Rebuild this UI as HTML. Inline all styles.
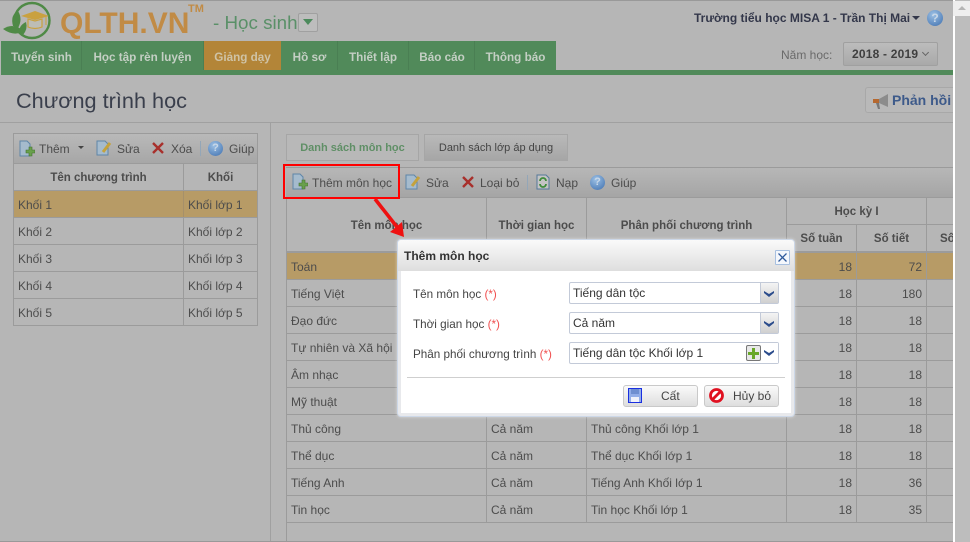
<!DOCTYPE html>
<html><head><meta charset="utf-8">
<style>
html,body{margin:0;padding:0;}
body{width:970px;height:542px;overflow:hidden;position:relative;background:#b6b6b6;font:12px "Liberation Sans",sans-serif;color:#4c4c4c;}
.a,.t,.l,.c,.r{position:absolute;}
.t{white-space:nowrap;line-height:16px;}
.b{font-weight:bold;font-size:11.5px;text-align:center;}
.tab{position:absolute;top:41px;height:29px;line-height:34px;text-align:center;font-weight:bold;color:#c4cfc4;background:#518a5a;font-size:11.7px;border-right:1px solid #4a7f53;}
.l{background:#9b9b9b;}
.sel{position:absolute;left:569px;width:208px;height:20px;background:#fff;border:1px solid #c3cad8;border-radius:2px;line-height:20px;color:#333;text-indent:3px;}
.dd{position:absolute;right:0;top:0;width:17px;height:20px;background:linear-gradient(#f4f4f4,#cfcfcf);border-left:1px solid #c3cad8;}
.ar{position:absolute;left:764px;}
.btn{position:absolute;top:385px;height:20px;background:linear-gradient(#fafafa,#dedede);border:1px solid #c9c9c9;border-radius:3px;line-height:20px;color:#444;}
.lb{position:absolute;color:#444;white-space:nowrap;line-height:16px;left:413px;font-size:11.7px;}
.lb i{font-style:normal;color:#f05050;}
</style></head><body>

<!-- top line -->
<div class="a" style="left:0;top:0;width:970px;height:1px;background:#999"></div>

<!-- logo -->
<svg class="a" style="left:0;top:0" width="60" height="42" viewBox="0 0 60 42">
<circle cx="32" cy="20.5" r="17.5" fill="none" stroke="#4f8a46" stroke-width="2.4"/>
<path d="M21 16 L35 11 L49 16 L35 20Z" fill="#c9a13f"/>
<path d="M28 19 V27 Q35 30 42 27 V19 L35 21Z" fill="#bdbdb5" stroke="#c9a13f" stroke-width="1.2"/>
<path d="M46 16 V25" stroke="#c9a13f" stroke-width="1"/>
<path d="M3 29 Q13 22 24 31 Q14 37 3 29Z" fill="#4f8a46"/>
<path d="M13 26 Q10 15 18 11 Q23 19 18 28Z" fill="#4f8a46"/>
<path d="M19 33 Q19 25 26 22 Q28 29 23 35Z" fill="#4f8a46"/>
</svg>
<div class="t" style="left:60px;top:5px;font:bold 30px/38px 'Liberation Sans',sans-serif;color:#c18b45;">QLTH.VN</div>
<div class="t" style="left:188px;top:3px;font:bold 11px/12px 'Liberation Sans',sans-serif;color:#c18b45;">TM</div>
<div class="t" style="left:213px;top:12px;font:18.8px/22px 'Liberation Sans',sans-serif;color:#5a9068;">- Học sinh</div>
<div class="a" style="left:298px;top:13px;width:18px;height:17px;border:1px solid #a0a0a0;border-radius:2px;background:#bdbdbd"></div>
<div class="a" style="left:303px;top:19px;width:0;height:0;border-left:5px solid transparent;border-right:5px solid transparent;border-top:6px solid #4c8a5c"></div>

<!-- user -->
<div class="t" style="left:694px;top:10px;color:#33374a;font-weight:bold;font-size:12px;">Trường tiểu học MISA 1 - Trần Thị Mai</div>
<div class="a" style="left:912px;top:16px;width:0;height:0;border-left:4px solid transparent;border-right:4px solid transparent;border-top:4px solid #33374a"></div>
<div class="a" style="left:927px;top:10px;width:16px;height:16px;border-radius:50%;background:radial-gradient(circle at 40% 30%,#9cc0e4,#3e6fae);color:#c9d8e8;font:bold 12px/16px 'Liberation Sans';text-align:center">?</div>

<!-- nav -->
<div class="a" style="left:1px;top:70px;width:952px;height:5px;background:#518a5a"></div>
<div class="tab" style="left:1px;width:80px;text-indent:1px">Tuyển sinh</div>
<div class="tab" style="left:82px;width:121px">Học tập rèn luyện</div>
<div class="tab" style="left:204px;width:77px;background:#b38538;color:#cfc3a6;border-right:1px solid #518a5a">Giảng dạy</div>
<div class="tab" style="left:282px;width:55px">Hồ sơ</div>
<div class="tab" style="left:338px;width:70px">Thiết lập</div>
<div class="tab" style="left:409px;width:65px;text-indent:1px">Báo cáo</div>
<div class="tab" style="left:475px;width:81px;border-right:0">Thông báo</div>

<!-- year -->
<div class="t" style="left:781px;top:47px;color:#6a6a6a">Năm học:</div>
<div class="a" style="left:843px;top:42px;width:93px;height:22px;border:1px solid #a0a0a0;background:linear-gradient(#bcbcbc,#a9a9a9);border-radius:2px"></div>
<div class="t" style="left:852px;top:46px;color:#3f3f3f;font-weight:bold;letter-spacing:.2px">2018 - 2019</div>
<div class="a" style="left:923px;top:50px;width:4px;height:4px;border-right:1px solid #666;border-bottom:1px solid #666;transform:rotate(45deg)"></div>

<!-- title -->
<div class="t" style="left:16px;top:88px;font:21.7px/26px 'Liberation Sans',sans-serif;color:#3a3f4c;">Chương trình học</div>
<div class="a" style="left:865px;top:87px;width:88px;height:26px;border:1px solid #a8a8a8;border-right:0;border-radius:3px 0 0 3px;box-sizing:border-box;background:#b9b9b9"></div>
<svg class="a" style="left:872px;top:93px" width="18" height="18"><path d="M2 6h5l9-5v13l-9-4H2z" fill="#8c8c8c"/><rect x="1" y="6" width="6" height="4" fill="#b5682f"/><path d="M4 10l2 6h2l-1-6z" fill="#777"/></svg>
<div class="t" style="left:892px;top:92px;font-weight:bold;font-size:14px;color:#3d5a8a">Phản hồi</div>
<div class="a" style="left:0;top:122px;width:953px;height:1px;background:#a0a0a0"></div>
<div class="a" style="left:270px;top:123px;width:1px;height:419px;background:#a0a0a0"></div>

<!-- left panel -->
<div class="a" style="left:13px;top:133px;width:245px;height:193px;border:1px solid #9b9b9b;box-sizing:border-box"></div>
<div class="a" style="left:14px;top:134px;width:243px;height:30px;background:linear-gradient(#b9b9b9,#a6a6a6)"></div>
<svg class="a" style="left:19px;top:140px" width="16" height="17"><path d="M1 1h7l3 3v12H1z" fill="#a5bbcd" stroke="#5f86a8"/><path d="M10 7h3v3h3v3h-3v3h-3v-3H7v-3h3z" fill="#69a04c" stroke="#43702f" stroke-width=".6"/></svg>
<div class="t" style="left:39px;top:141px">Thêm</div>
<div class="a" style="left:78px;top:146px;border-left:3px solid transparent;border-right:3px solid transparent;border-top:3px solid #444"></div>
<svg class="a" style="left:96px;top:140px" width="16" height="16"><path d="M1 1h8l3 3v11H1z" fill="#a5bbcd" stroke="#5f86a8"/><path d="M14 3L7 12" stroke="#c4a23c" stroke-width="3"/></svg>
<div class="t" style="left:117px;top:141px">Sửa</div>
<svg class="a" style="left:152px;top:142px" width="12" height="12"><path d="M1 1L11 11M11 1L1 11" stroke="#a8302c" stroke-width="2.4"/></svg>
<div class="t" style="left:171px;top:141px">Xóa</div>
<div class="a" style="left:200px;top:141px;width:1px;height:15px;background:#93a6b8"></div>
<div class="a" style="left:208px;top:141px;width:15px;height:15px;border-radius:50%;background:radial-gradient(circle at 40% 30%,#9cc0e4,#3e6fae);color:#c9d8e8;font:bold 11px/15px 'Liberation Sans';text-align:center">?</div>
<div class="t" style="left:229px;top:141px">Giúp</div>
<div class="l" style="left:14px;top:163px;width:243px;height:1px"></div>
<div class="l" style="left:14px;top:190px;width:243px;height:1px"></div>
<div class="l" style="left:14px;top:244px;width:243px;height:1px"></div>
<div class="l" style="left:14px;top:271px;width:243px;height:1px"></div>
<div class="l" style="left:14px;top:298px;width:243px;height:1px"></div>
<div class="l" style="left:183px;top:164px;width:1px;height:161px"></div>
<div class="a" style="left:14px;top:191px;width:243px;height:27px;background:#b79b66"></div>
<div class="l" style="left:183px;top:191px;width:1px;height:27px;background:#a6906a"></div>
<div class="t b" style="left:14px;width:169px;top:170px;">Tên chương trình</div>
<div class="t b" style="left:184px;width:73px;top:170px;">Khối</div>
<div class="t" style="left:18px;top:197px">Khối 1</div><div class="t" style="left:188px;top:197px">Khối lớp 1</div>
<div class="t" style="left:18px;top:224px">Khối 2</div><div class="t" style="left:188px;top:224px">Khối lớp 2</div>
<div class="t" style="left:18px;top:251px">Khối 3</div><div class="t" style="left:188px;top:251px">Khối lớp 3</div>
<div class="t" style="left:18px;top:278px">Khối 4</div><div class="t" style="left:188px;top:278px">Khối lớp 4</div>
<div class="t" style="left:18px;top:305px">Khối 5</div><div class="t" style="left:188px;top:305px">Khối lớp 5</div>
<div class="l" style="left:14px;top:217px;width:243px;height:1px"></div>

<!-- right tabs -->
<div class="a" style="left:286px;top:134px;width:133px;height:27px;border:1px solid #a6a6a6;box-sizing:border-box;background:#b8b8b8;text-align:center;line-height:26px;font-weight:bold;color:#5f8f66;font-size:11px">Danh sách môn học</div>
<div class="a" style="left:424px;top:134px;width:144px;height:27px;border:1px solid #a6a6a6;box-sizing:border-box;background:linear-gradient(#b9b9b9,#a6a6a6);text-align:center;line-height:26px;font-size:11px;color:#444">Danh sách lớp áp dụng</div>

<!-- toolbar -->
<div class="a" style="left:286px;top:167px;width:667px;height:30px;background:linear-gradient(#b7b7b7,#a5a5a5);border-top:1px solid #9b9b9b;box-sizing:border-box"></div>
<svg class="a" style="left:292px;top:173px" width="16" height="17"><path d="M1 1h7l3 3v12H1z" fill="#a5bbcd" stroke="#5f86a8"/><path d="M10 7h3v3h3v3h-3v3h-3v-3H7v-3h3z" fill="#69a04c" stroke="#43702f" stroke-width=".6"/></svg>
<div class="t" style="left:312px;top:175px">Thêm môn học</div>
<svg class="a" style="left:405px;top:174px" width="16" height="16"><path d="M1 1h8l3 3v11H1z" fill="#a5bbcd" stroke="#5f86a8"/><path d="M14 3L7 12" stroke="#c4a23c" stroke-width="3"/></svg>
<div class="t" style="left:426px;top:175px">Sửa</div>
<svg class="a" style="left:462px;top:176px" width="12" height="12"><path d="M1 1L11 11M11 1L1 11" stroke="#a8302c" stroke-width="2.4"/></svg>
<div class="t" style="left:480px;top:175px">Loại bỏ</div>
<div class="a" style="left:527px;top:175px;width:1px;height:15px;background:#93a6b8"></div>
<svg class="a" style="left:536px;top:174px" width="15" height="16"><path d="M1 1h9l3 3v11H1z" fill="#c4c4c4" stroke="#55789a"/><path d="M4 7a3 3 0 0 1 6 0M10 10a3 3 0 0 1-6 0" fill="none" stroke="#3f8c3c" stroke-width="1.8"/></svg>
<div class="t" style="left:556px;top:175px">Nạp</div>
<div class="a" style="left:590px;top:175px;width:15px;height:15px;border-radius:50%;background:radial-gradient(circle at 40% 30%,#9cc0e4,#3e6fae);color:#c9d8e8;font:bold 11px/15px 'Liberation Sans';text-align:center">?</div>
<div class="t" style="left:611px;top:175px">Giúp</div>

<!-- main table grid -->
<div class="l" style="left:286px;top:197px;width:667px;height:1px"></div>
<div class="l" style="left:786px;top:224px;width:167px;height:1px"></div>
<div class="l" style="left:286px;top:251px;width:667px;height:2px"></div>
<div class="a" style="left:287px;top:253px;width:666px;height:26px;background:#b79b66"></div>
<div class="l" style="left:286px;top:279px;width:667px;height:1px"></div>
<div class="l" style="left:286px;top:306px;width:667px;height:1px"></div>
<div class="l" style="left:286px;top:333px;width:667px;height:1px"></div>
<div class="l" style="left:286px;top:360px;width:667px;height:1px"></div>
<div class="l" style="left:286px;top:387px;width:667px;height:1px"></div>
<div class="l" style="left:286px;top:414px;width:667px;height:1px"></div>
<div class="l" style="left:286px;top:441px;width:667px;height:1px"></div>
<div class="l" style="left:286px;top:468px;width:667px;height:1px"></div>
<div class="l" style="left:286px;top:495px;width:667px;height:1px"></div>
<div class="l" style="left:286px;top:522px;width:667px;height:1px"></div>
<div class="l" style="left:286px;top:197px;width:1px;height:345px"></div>
<div class="l" style="left:486px;top:197px;width:1px;height:326px"></div>
<div class="l" style="left:586px;top:197px;width:1px;height:326px"></div>
<div class="l" style="left:786px;top:197px;width:1px;height:326px"></div>
<div class="l" style="left:856px;top:225px;width:1px;height:298px"></div>
<div class="l" style="left:926px;top:197px;width:1px;height:326px"></div>

<div class="t b" style="left:287px;width:199px;top:218px;">Tên môn học</div>
<div class="t b" style="left:487px;width:99px;top:218px;">Thời gian học</div>
<div class="t b" style="left:587px;width:199px;top:218px;">Phân phối chương trình</div>
<div class="t b" style="left:787px;width:139px;top:204px;">Học kỳ I</div>
<div class="t b" style="left:787px;width:69px;top:231px;">Số tuần</div>
<div class="t b" style="left:857px;width:69px;top:231px;">Số tiết</div>
<div class="t b" style="left:940px;top:231px;">Số</div>

<div class="t" style="left:291px;top:259px">Toán</div>
<div class="t" style="left:291px;top:286px">Tiếng Việt</div>
<div class="t" style="left:291px;top:313px">Đạo đức</div>
<div class="t" style="left:291px;top:340px">Tự nhiên và Xã hội</div>
<div class="t" style="left:291px;top:367px">Âm nhạc</div>
<div class="t" style="left:291px;top:394px">Mỹ thuật</div>
<div class="t" style="left:291px;top:421px">Thủ công</div>
<div class="t" style="left:291px;top:448px">Thể dục</div>
<div class="t" style="left:291px;top:475px">Tiếng Anh</div>
<div class="t" style="left:291px;top:502px">Tin học</div>
<div class="t" style="left:491px;top:421px">Cả năm</div>
<div class="t" style="left:491px;top:448px">Cả năm</div>
<div class="t" style="left:491px;top:475px">Cả năm</div>
<div class="t" style="left:491px;top:502px">Cả năm</div>
<div class="t" style="left:591px;top:421px">Thủ công Khối lớp 1</div>
<div class="t" style="left:591px;top:448px">Thể dục Khối lớp 1</div>
<div class="t" style="left:591px;top:475px">Tiếng Anh Khối lớp 1</div>
<div class="t" style="left:591px;top:502px">Tin học Khối lớp 1</div>

<div class="t" style="left:787px;width:65px;text-align:right;top:259px">18</div><div class="t" style="left:857px;width:65px;text-align:right;top:259px">72</div>
<div class="t" style="left:787px;width:65px;text-align:right;top:286px">18</div><div class="t" style="left:857px;width:65px;text-align:right;top:286px">180</div>
<div class="t" style="left:787px;width:65px;text-align:right;top:313px">18</div><div class="t" style="left:857px;width:65px;text-align:right;top:313px">18</div>
<div class="t" style="left:787px;width:65px;text-align:right;top:340px">18</div><div class="t" style="left:857px;width:65px;text-align:right;top:340px">18</div>
<div class="t" style="left:787px;width:65px;text-align:right;top:367px">18</div><div class="t" style="left:857px;width:65px;text-align:right;top:367px">18</div>
<div class="t" style="left:787px;width:65px;text-align:right;top:394px">18</div><div class="t" style="left:857px;width:65px;text-align:right;top:394px">18</div>
<div class="t" style="left:787px;width:65px;text-align:right;top:421px">18</div><div class="t" style="left:857px;width:65px;text-align:right;top:421px">18</div>
<div class="t" style="left:787px;width:65px;text-align:right;top:448px">18</div><div class="t" style="left:857px;width:65px;text-align:right;top:448px">18</div>
<div class="t" style="left:787px;width:65px;text-align:right;top:475px">18</div><div class="t" style="left:857px;width:65px;text-align:right;top:475px">36</div>
<div class="t" style="left:787px;width:65px;text-align:right;top:502px">18</div><div class="t" style="left:857px;width:65px;text-align:right;top:502px">35</div>

<!-- scrollbar -->
<div class="a" style="left:953px;top:0;width:17px;height:542px;background:#bdbdbd;border-left:2px solid #fff;box-sizing:border-box"></div>
<div class="a" style="left:953px;top:1px;width:17px;height:15px;background:#eee"></div>
<div class="a" style="left:958px;top:6px;border-left:4px solid transparent;border-right:4px solid transparent;border-bottom:4px solid #b5b5b5"></div>
<div class="a" style="left:0;top:541px;width:953px;height:1px;background:#999"></div>

<!-- dialog -->
<div class="a" style="left:397px;top:239px;width:398px;height:178px;border-radius:4px;background:#e8e9ec;border:1px solid #cdd8e8;box-sizing:border-box;box-shadow:0 0 3px rgba(255,255,255,.5)"></div>
<div class="a" style="left:398px;top:240px;width:396px;height:31px;background:linear-gradient(#fafafa,#dedede);border-radius:3px 3px 0 0"></div>
<div class="a" style="left:401px;top:271px;width:390px;height:142px;background:#fff"></div>
<div class="t" style="left:404px;top:248px;font-weight:bold;color:#333">Thêm môn học</div>
<div class="a" style="left:775px;top:250px;width:13px;height:13px;border:1px solid #a8c0e0;background:#f4f7fc;border-radius:1px"></div>
<svg class="a" style="left:778px;top:253px" width="9" height="9"><path d="M0.5 0.5L8.5 8.5M8.5 0.5L0.5 8.5" stroke="#2f5a9c" stroke-width="1.3"/></svg>

<div class="lb" style="top:287px">Tên môn học <i>(*)</i></div>
<div class="lb" style="top:317px">Thời gian học <i>(*)</i></div>
<div class="lb" style="top:347px">Phân phối chương trình <i>(*)</i></div>
<div class="sel" style="top:282px">Tiếng dân tộc<div class="dd"></div></div>
<div class="sel" style="top:312px">Cả năm<div class="dd"></div></div>
<div class="sel" style="top:342px">Tiếng dân tộc Khối lớp 1<div class="dd" style="background:#fff;border-left:0"></div></div>
<svg class="ar" style="top:291px" width="10" height="6"><path d="M0 0L5 3L10 0V2L5 6L0 2Z" fill="#2b4c8c"/></svg>
<svg class="ar" style="top:321px" width="10" height="6"><path d="M0 0L5 3L10 0V2L5 6L0 2Z" fill="#2b4c8c"/></svg>
<svg class="ar" style="top:350px" width="10" height="6"><path d="M0 0L5 3L10 0V2L5 6L0 2Z" fill="#2b4c8c"/></svg>
<div class="a" style="left:746px;top:345px;width:13px;height:14px;border:1px solid #777;border-radius:2px;background:#e8e8e8"></div>
<svg class="a" style="left:748px;top:348px" width="11" height="11"><path d="M4 0h3v4h4v3H7v4H4V7H0V4h4z" fill="#6aa82a"/></svg>
<div class="a" style="left:407px;top:377px;width:378px;height:1px;background:#cfcfcf"></div>

<div class="btn" style="left:623px;width:73px;"><span style="position:absolute;left:37px;top:0">Cất</span></div>
<svg class="a" style="left:628px;top:388px" width="14" height="15"><rect x=".5" y=".5" width="13" height="14" fill="#93aee8" stroke="#1a2fe0"/><rect x="3" y="1" width="8" height="5" fill="#6f8fd0"/><rect x="3" y="9" width="8" height="5" fill="#f0f2fa"/></svg>
<div class="btn" style="left:704px;width:73px;"><span style="position:absolute;left:28px;top:0">Hủy bỏ</span></div>
<svg class="a" style="left:709px;top:388px" width="15" height="15"><circle cx="7.5" cy="7.5" r="6" fill="#fff" stroke="#e01020" stroke-width="2.8"/><path d="M3.5 11.5L11.5 3.5" stroke="#e01020" stroke-width="2.8"/></svg>

<!-- red box + arrow -->
<div class="a" style="left:283px;top:164px;width:117px;height:35px;border:2px solid #f00;box-sizing:border-box"></div>
<svg class="a" style="left:370px;top:195px" width="40" height="46"><path d="M5 4L27 32" stroke="#ee1111" stroke-width="3.6"/><path d="M34 42L20 37L32 27Z" fill="#ee1111"/></svg>

</body></html>
